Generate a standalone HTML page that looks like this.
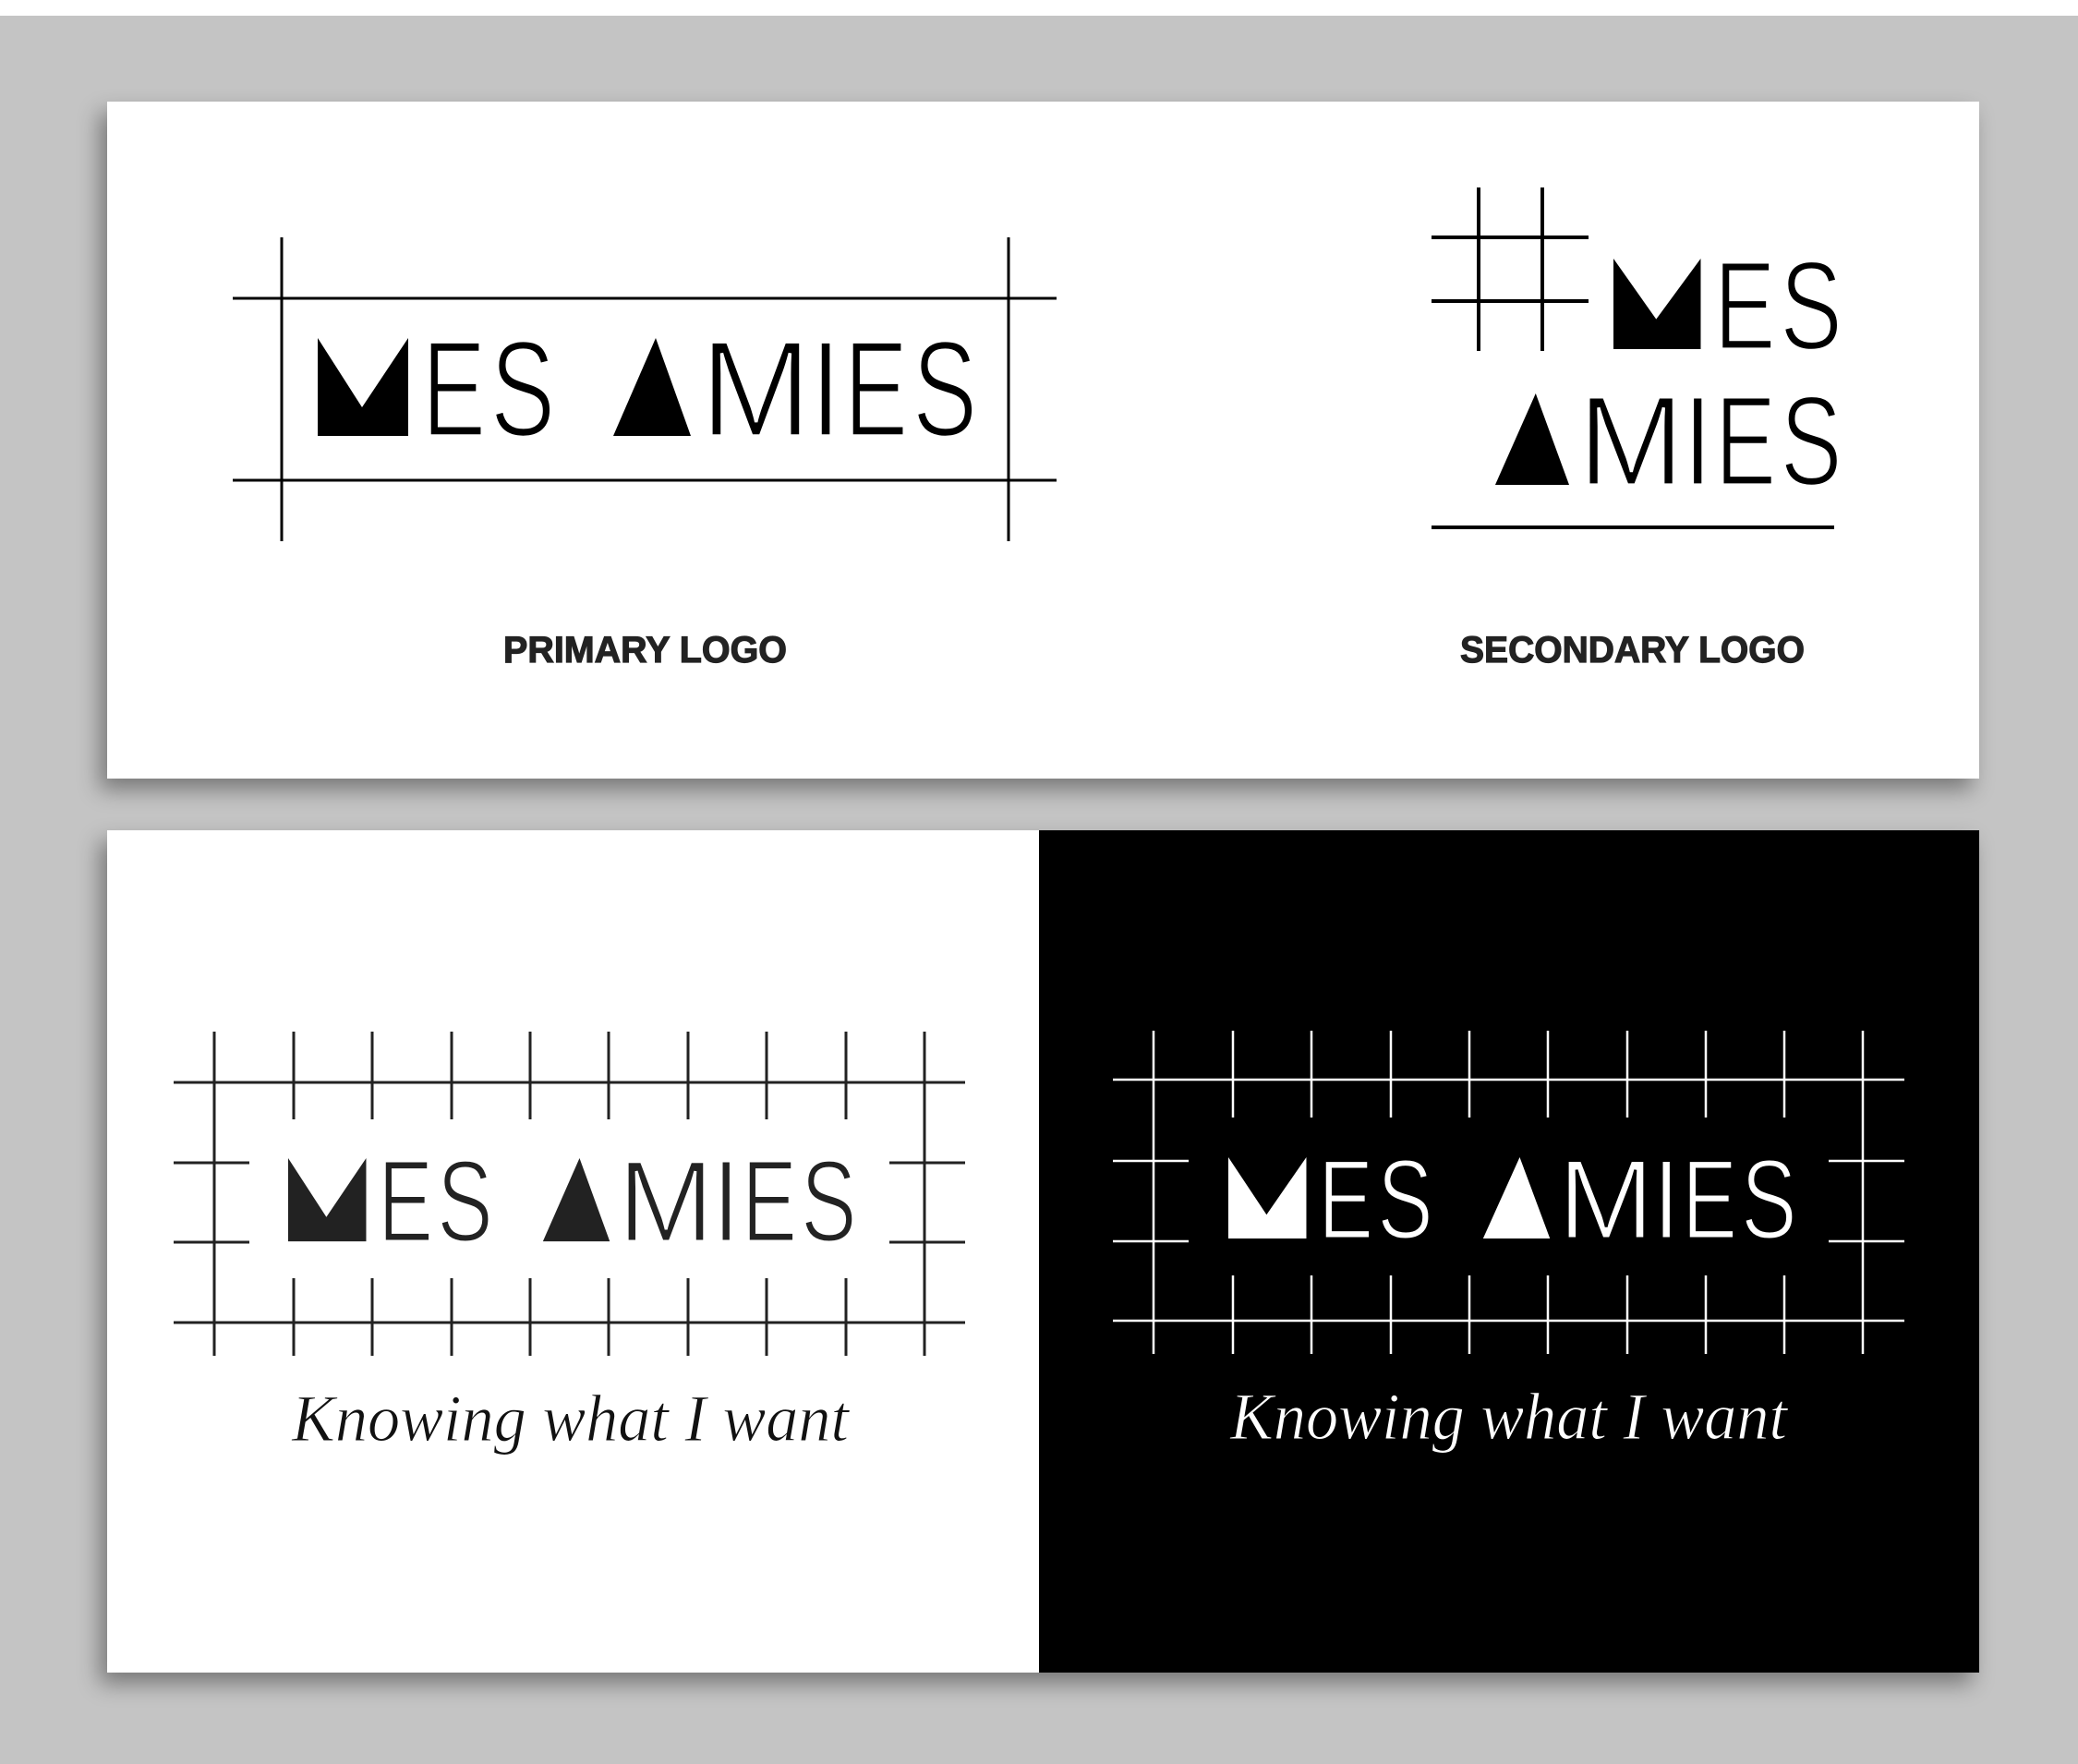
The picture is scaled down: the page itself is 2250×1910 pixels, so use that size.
<!DOCTYPE html>
<html><head><meta charset="utf-8"><style>
html,body{margin:0;padding:0}
body{width:2250px;height:1910px;background:#c4c4c4;position:relative;overflow:hidden}
.top{position:absolute;left:0;top:0;width:2250px;height:17px;background:#fff}
.card{position:absolute;background:#fff;box-shadow:-8px 12px 22px rgba(0,0,0,.38)}
svg{position:absolute;left:0;top:0}
.lg text{font-family:"Liberation Sans",sans-serif;font-size:148px;stroke:#fff;stroke-width:3.5}
.lg.dk text{stroke:#000}
</style></head><body>
<div class="top"></div>
<div class="card" style="left:116px;top:110px;width:2027px;height:733px"></div>
<div class="card" style="left:116px;top:899px;width:2027px;height:912px"></div>
<div style="position:absolute;left:1125px;top:899px;width:1018px;height:912px;background:#000"></div>
<svg width="2250" height="1910" viewBox="0 0 2250 1910">
<!-- primary -->
<g stroke="#000" stroke-width="3">
<line x1="305" y1="257" x2="305" y2="586"/><line x1="1092" y1="257" x2="1092" y2="586"/>
<line x1="252" y1="323" x2="1144" y2="323"/><line x1="252" y1="520" x2="1144" y2="520"/>
</g>
<g class="lg" fill="#000" transform="translate(344,366)">
<polygon points="0,0 48,75 98,0 98,106 0,106"/>
<text transform="translate(113,106) scale(.70,1)">E</text>
<text transform="translate(187,106) scale(.71,1)">S</text>
<polygon points="320,106 366,0 404,106"/>
<text transform="translate(414,106) scale(.98,1)">M</text>
<text transform="translate(533,106) scale(.83,1)">I</text>
<text transform="translate(570,106) scale(.70,1)">E</text>
<text transform="translate(644,106) scale(.71,1)">S</text>
</g>
<text x="545" y="717" textLength="307" lengthAdjust="spacingAndGlyphs" font-family="Liberation Sans,sans-serif" font-weight="bold" font-size="40" fill="#222" stroke="#222" stroke-width="1.2">PRIMARY LOGO</text>
<!-- secondary -->
<g stroke="#000" stroke-width="4">
<line x1="1601" y1="203" x2="1601" y2="380"/><line x1="1670" y1="203" x2="1670" y2="380"/>
<line x1="1550" y1="257" x2="1720" y2="257"/><line x1="1550" y1="326" x2="1720" y2="326"/>
<line x1="1550" y1="571" x2="1986" y2="571"/>
</g>
<g class="lg" fill="#000" transform="translate(1747,280) scale(.964,.925)">
<polygon points="0,0 48,71 98,0 98,106 0,106"/>
<text transform="translate(113,106) scale(.70,1)">E</text>
<text transform="translate(187,106) scale(.71,1)">S</text>
</g>
<g class="lg" fill="#000" transform="translate(1314,426) scale(.953,.934)">
<polygon points="320,106 366,0 404,106"/>
<text transform="translate(414,106) scale(.98,1)">M</text>
<text transform="translate(533,106) scale(.83,1)">I</text>
<text transform="translate(570,106) scale(.70,1)">E</text>
<text transform="translate(644,106) scale(.71,1)">S</text>
</g>
<text x="1581" y="717" textLength="373" lengthAdjust="spacingAndGlyphs" font-family="Liberation Sans,sans-serif" font-weight="bold" font-size="40" fill="#222" stroke="#222" stroke-width="1.2">SECONDARY LOGO</text>
<!-- white card grid -->
<g stroke="#222" stroke-width="3">
<line x1="188" y1="1172" x2="1045" y2="1172"/><line x1="188" y1="1432" x2="1045" y2="1432"/>
<line x1="188" y1="1259" x2="270" y2="1259"/><line x1="188" y1="1345" x2="270" y2="1345"/>
<line x1="963" y1="1259" x2="1045" y2="1259"/><line x1="963" y1="1345" x2="1045" y2="1345"/>
<line x1="232" y1="1117" x2="232" y2="1468"/><line x1="1001" y1="1117" x2="1001" y2="1468"/>
<line x1="318" y1="1117" x2="318" y2="1212"/><line x1="403" y1="1117" x2="403" y2="1212"/><line x1="489" y1="1117" x2="489" y2="1212"/><line x1="574" y1="1117" x2="574" y2="1212"/><line x1="659" y1="1117" x2="659" y2="1212"/><line x1="745" y1="1117" x2="745" y2="1212"/><line x1="830" y1="1117" x2="830" y2="1212"/><line x1="916" y1="1117" x2="916" y2="1212"/>
<line x1="318" y1="1384" x2="318" y2="1468"/><line x1="403" y1="1384" x2="403" y2="1468"/><line x1="489" y1="1384" x2="489" y2="1468"/><line x1="574" y1="1384" x2="574" y2="1468"/><line x1="659" y1="1384" x2="659" y2="1468"/><line x1="745" y1="1384" x2="745" y2="1468"/><line x1="830" y1="1384" x2="830" y2="1468"/><line x1="916" y1="1384" x2="916" y2="1468"/>
</g>
<g class="lg" fill="#222" transform="translate(312,1254) scale(.862,.85)">
<polygon points="0,0 48,75 98,0 98,106 0,106"/>
<text transform="translate(113,106) scale(.70,1)">E</text>
<text transform="translate(187,106) scale(.71,1)">S</text>
<polygon points="320,106 366,0 404,106"/>
<text transform="translate(414,106) scale(.98,1)">M</text>
<text transform="translate(533,106) scale(.83,1)">I</text>
<text transform="translate(570,106) scale(.70,1)">E</text>
<text transform="translate(644,106) scale(.71,1)">S</text>
</g>
<text x="316" y="1560" textLength="603" lengthAdjust="spacingAndGlyphs" font-family="Liberation Serif,serif" font-style="italic" font-size="72" fill="#111" stroke="#fff" stroke-width="1">Knowing what I want</text>
<!-- black card grid -->
<g stroke="#fff" stroke-width="2.5">
<line x1="1205" y1="1169" x2="2062" y2="1169"/><line x1="1205" y1="1430" x2="2062" y2="1430"/>
<line x1="1205" y1="1257" x2="1287" y2="1257"/><line x1="1205" y1="1344" x2="1287" y2="1344"/>
<line x1="1980" y1="1257" x2="2062" y2="1257"/><line x1="1980" y1="1344" x2="2062" y2="1344"/>
<line x1="1249" y1="1116" x2="1249" y2="1466"/><line x1="2017" y1="1116" x2="2017" y2="1466"/>
<line x1="1335" y1="1116" x2="1335" y2="1210"/><line x1="1420" y1="1116" x2="1420" y2="1210"/><line x1="1506" y1="1116" x2="1506" y2="1210"/><line x1="1591" y1="1116" x2="1591" y2="1210"/><line x1="1676" y1="1116" x2="1676" y2="1210"/><line x1="1762" y1="1116" x2="1762" y2="1210"/><line x1="1847" y1="1116" x2="1847" y2="1210"/><line x1="1932" y1="1116" x2="1932" y2="1210"/>
<line x1="1335" y1="1381" x2="1335" y2="1466"/><line x1="1420" y1="1381" x2="1420" y2="1466"/><line x1="1506" y1="1381" x2="1506" y2="1466"/><line x1="1591" y1="1381" x2="1591" y2="1466"/><line x1="1676" y1="1381" x2="1676" y2="1466"/><line x1="1762" y1="1381" x2="1762" y2="1466"/><line x1="1847" y1="1381" x2="1847" y2="1466"/><line x1="1932" y1="1381" x2="1932" y2="1466"/>
</g>
<g class="lg dk" fill="#fff" transform="translate(1330,1253) scale(.862,.83)">
<polygon points="0,0 48,75 98,0 98,106 0,106"/>
<text transform="translate(113,106) scale(.70,1)">E</text>
<text transform="translate(187,106) scale(.71,1)">S</text>
<polygon points="320,106 366,0 404,106"/>
<text transform="translate(414,106) scale(.98,1)">M</text>
<text transform="translate(533,106) scale(.83,1)">I</text>
<text transform="translate(570,106) scale(.70,1)">E</text>
<text transform="translate(644,106) scale(.71,1)">S</text>
</g>
<text x="1332" y="1558" textLength="603" lengthAdjust="spacingAndGlyphs" font-family="Liberation Serif,serif" font-style="italic" font-size="72" fill="#fff" stroke="#000" stroke-width="1">Knowing what I want</text>
</svg>
</body></html>
